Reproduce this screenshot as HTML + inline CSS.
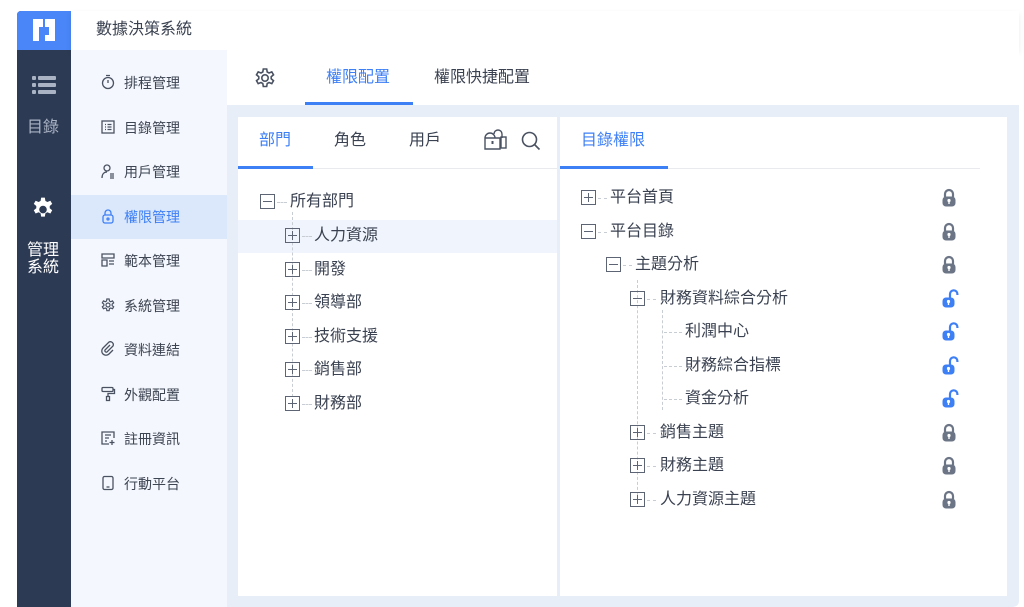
<!DOCTYPE html>
<html><head><meta charset="utf-8">
<style>
*{margin:0;padding:0;box-sizing:border-box}
body{width:1024px;height:607px;overflow:hidden;background:#fff;font-family:"Liberation Sans","Noto Sans CJK TC",sans-serif;position:relative;color:#3a4150}
.a{position:absolute}
.t{position:absolute;white-space:nowrap;line-height:1}
.tr{font-size:16px !important}
.box{position:absolute;width:15px;height:15px;border:1.5px solid #5d6575}
.box:before{content:"";position:absolute;left:2px;right:2px;top:5.5px;height:1.5px;background:#5d6575}
.box.p:after{content:"";position:absolute;top:2px;bottom:2px;left:5.5px;width:1.5px;background:#5d6575}
.dh{position:absolute;height:0;border-top:1px dashed #c8ccd3}
.dv{position:absolute;width:0;border-left:1px dashed #c8ccd3}
.si{position:absolute;left:100px;width:16px;height:16px}
.sl{position:absolute;left:124px;font-size:14px;color:#3d4452;line-height:1}
</style></head><body>
<div class="a" style="left:17px;top:11px;width:54px;height:596px;background:#2c3a54;border-radius:4px 0 0 0"></div>
<div class="a" style="left:17px;top:11px;width:54px;height:39px;background:#4a86f7;border-radius:4px 0 0 0"></div>
<svg class="a" style="left:31px;top:17px" width="26" height="26" viewBox="0 0 26 26"><path d="M2 2h10v8h-4v14h-6z M14 2h10v22h-10v-6h4v-8h-4z" fill="#fff"/></svg>
<svg class="a" style="left:32px;top:75px" width="24" height="20" viewBox="0 0 24 20"><g fill="#aab3c4"><rect x="0" y="1" width="4" height="4" rx="1"/><rect x="6" y="1" width="18" height="4" rx="1"/><rect x="0" y="8" width="4" height="4" rx="1"/><rect x="6" y="8" width="18" height="4" rx="1"/><rect x="0" y="15" width="4" height="4" rx="1"/><rect x="6" y="15" width="18" height="4" rx="1"/></g></svg>
<div class="t" style="left:27px;top:120px;font-size:16px;color:#aab3c4">目錄</div>
<svg class="a" style="left:30px;top:196px" width="26" height="26" viewBox="0 0 24 24"><path fill="#fff" fill-rule="evenodd" d="M10.3 1h3.4l.5 3 1.8 1 2.8-1.1 1.7 2.9-2.3 1.9v2.1l2.3 1.9-1.7 2.9-2.8-1.1-1.8 1-.5 3h-3.4l-.5-3-1.8-1-2.8 1.1-1.7-2.9 2.3-1.9v-2.1L3.5 6.8l1.7-2.9L8 5l1.8-1zM12 8.5a3.5 3.5 0 100 7 3.5 3.5 0 000-7z" transform="translate(0 0.5)"/></svg>
<div class="t" style="left:27px;top:242px;font-size:16px;color:#fff;line-height:17px">管理<br>系統</div>
<div class="a" style="left:71px;top:11px;width:948px;height:39px;background:#fff;box-shadow:0 3px 6px rgba(0,0,0,.08)"></div>
<div class="t" style="left:96px;top:22px;font-size:16px;color:#3a4150">數據決策系統</div>
<div class="a" style="left:71px;top:50px;width:156px;height:557px;background:#f4f7fd"></div>
<div class="a" style="left:71px;top:195px;width:156px;height:44px;background:#dbe8fb"></div>
<svg class="si" style="top:74px" viewBox="0 0 16 16" fill="none" stroke="#4a5262" stroke-width="1.3"><circle cx="8" cy="9" r="5.5"/><path d="M6 1.5h4M8 9V6"/></svg><div class="sl" style="top:76px">排程管理</div>
<svg class="si" style="top:119px" viewBox="0 0 16 16" fill="none" stroke="#4a5262" stroke-width="1.3"><rect x="2" y="2" width="12" height="12"/><path d="M5 5.5h1M7.5 5.5h4M5 8h1M7.5 8h4M5 10.5h1M7.5 10.5h4"/></svg><div class="sl" style="top:121px">目錄管理</div>
<svg class="si" style="top:163px" viewBox="0 0 16 16" fill="none" stroke="#4a5262" stroke-width="1.3"><circle cx="7" cy="5" r="3"/><path d="M2 15c0-4 2-6 5-6M10 11h4M10 13h4M10 15h4"/></svg><div class="sl" style="top:165px">用戶管理</div>
<svg class="si" style="top:208px" viewBox="0 0 16 16" fill="none" stroke="#3d7ff5" stroke-width="1.3"><rect x="3" y="7" width="10" height="8" rx="2"/><path d="M5 7V5a3 3 0 016 0v2"/><circle cx="8" cy="11" r="1"/></svg><div class="sl" style="top:210px;color:#3d7ff5">權限管理</div>
<svg class="si" style="top:252px" viewBox="0 0 16 16" fill="none" stroke="#4a5262" stroke-width="1.3"><path d="M2 2h12v4H2zM2 8h5v6H2zM9 9h5M9 12h5"/></svg><div class="sl" style="top:254px">範本管理</div>
<svg class="si" style="top:297px" viewBox="0 0 24 24" fill="none" stroke="#4a5262" stroke-width="1.8"><path d="M10.3 1h3.4l.5 3 1.8 1 2.8-1.1 1.7 2.9-2.3 1.9v2.1l2.3 1.9-1.7 2.9-2.8-1.1-1.8 1-.5 3h-3.4l-.5-3-1.8-1-2.8 1.1-1.7-2.9 2.3-1.9v-2.1L3.5 6.8l1.7-2.9L8 5l1.8-1z" transform="translate(0 2)"/><circle cx="12" cy="12" r="3"/></svg><div class="sl" style="top:299px">系統管理</div>
<svg class="si" style="top:341px" viewBox="0 0 16 16" fill="none" stroke="#4a5262" stroke-width="1.3"><path d="M10 4l-5 5a1.5 1.5 0 002 2l6-6a3 3 0 00-4-4L3 7a4 4 0 006 6l4-4"/></svg><div class="sl" style="top:343px">資料連結</div>
<svg class="si" style="top:386px" viewBox="0 0 16 16" fill="none" stroke="#4a5262" stroke-width="1.3"><rect x="2" y="1.5" width="11" height="4" rx="1"/><path d="M13 3.5h1.5v4H8v3M6.5 10.5h3v4h-3z"/></svg><div class="sl" style="top:388px">外觀配置</div>
<svg class="si" style="top:430px" viewBox="0 0 16 16" fill="none" stroke="#4a5262" stroke-width="1.3"><path d="M14 8V2H2v12h7M5 5h6M5 8h4M5 11h2M12 10v5M9.5 12.5h5"/></svg><div class="sl" style="top:432px">註冊資訊</div>
<svg class="si" style="top:475px" viewBox="0 0 16 16" fill="none" stroke="#4a5262" stroke-width="1.3"><rect x="3" y="1.5" width="10" height="13" rx="1.5"/><path d="M6.5 12h3"/></svg><div class="sl" style="top:477px">行動平台</div>
<div class="a" style="left:227px;top:50px;width:792px;height:557px;background:#e8eef8;border-radius:0 0 6px 0"></div>
<div class="a" style="left:227px;top:50px;width:792px;height:55px;background:#fff"></div>
<svg class="a" style="left:253px;top:66px" width="24" height="24" viewBox="0 0 24 24" fill="none" stroke="#4a5262" stroke-width="1.6"><path d="M10.3 1h3.4l.5 3 1.8 1 2.8-1.1 1.7 2.9-2.3 1.9v2.1l2.3 1.9-1.7 2.9-2.8-1.1-1.8 1-.5 3h-3.4l-.5-3-1.8-1-2.8 1.1-1.7-2.9 2.3-1.9v-2.1L3.5 6.8l1.7-2.9L8 5l1.8-1z" transform="translate(0 2)"/><circle cx="12" cy="12" r="3.2"/></svg>
<div class="t" style="left:326px;top:70px;font-size:16px;color:#3d7ff5">權限配置</div>
<div class="a" style="left:305px;top:102px;width:108px;height:3px;background:#3d7ff5"></div>
<div class="t" style="left:434px;top:70px;font-size:16px;color:#3a4150">權限快捷配置</div>
<div class="a" style="left:238px;top:117px;width:319px;height:479px;background:#fff"></div>
<div class="a" style="left:238px;top:168px;width:319px;height:1px;background:#e8eaee"></div>
<div class="t" style="left:259px;top:133px;font-size:16px;color:#3d7ff5">部門</div>
<div class="a" style="left:238px;top:166px;width:75px;height:3px;background:#3d7ff5"></div>
<div class="t" style="left:334px;top:133px;font-size:16px">角色</div>
<div class="t" style="left:409px;top:133px;font-size:16px">用戶</div>
<svg class="a" style="left:484px;top:129px" width="24" height="22" viewBox="0 0 24 22" fill="none" stroke="#4a5262" stroke-width="1.4"><path d="M10 5a4 4 0 018 0v4"/><rect x="17" y="8" width="5" height="11"/><path d="M1 19V9a5 5 0 0110 0M1 9h15v11H1z"/><path d="M8.5 12v3" stroke-width="2"/></svg>
<svg class="a" style="left:520px;top:130px" width="22" height="22" viewBox="0 0 22 22" fill="none" stroke="#4a5262" stroke-width="1.6"><circle cx="9.5" cy="9.5" r="7"/><path d="M14.5 14.5l5 5"/></svg>
<div class="a" style="left:238px;top:220px;width:319px;height:33px;background:#f0f5fd"></div>
<div class="box" style="left:260px;top:194px"></div><div class="dh" style="left:277px;top:202px;width:10px"></div>
<div class="t tr" style="left:290px;top:194px">所有部門</div>
<div class="dv" style="left:292px;top:212px;height:185px"></div>
<div class="box p" style="left:285px;top:228px"></div><div class="dh" style="left:302px;top:236px;width:10px"></div><div class="t tr" style="left:314px;top:228px">人力資源</div>
<div class="box p" style="left:285px;top:262px"></div><div class="dh" style="left:302px;top:270px;width:10px"></div><div class="t tr" style="left:314px;top:262px">開發</div>
<div class="box p" style="left:285px;top:295px"></div><div class="dh" style="left:302px;top:303px;width:10px"></div><div class="t tr" style="left:314px;top:295px">領導部</div>
<div class="box p" style="left:285px;top:329px"></div><div class="dh" style="left:302px;top:337px;width:10px"></div><div class="t tr" style="left:314px;top:329px">技術支援</div>
<div class="box p" style="left:285px;top:362px"></div><div class="dh" style="left:302px;top:370px;width:10px"></div><div class="t tr" style="left:314px;top:362px">銷售部</div>
<div class="box p" style="left:285px;top:396px"></div><div class="dh" style="left:302px;top:404px;width:10px"></div><div class="t tr" style="left:314px;top:396px">財務部</div>
<div class="a" style="left:560px;top:117px;width:447px;height:479px;background:#fff"></div>
<div class="a" style="left:560px;top:168px;width:420px;height:1px;background:#e8eaee"></div>
<div class="t" style="left:581px;top:133px;font-size:16px;color:#3d7ff5">目錄權限</div>
<div class="a" style="left:560px;top:166px;width:108px;height:3px;background:#3d7ff5"></div>
<div class="box p" style="left:581px;top:190px"></div><div class="dh" style="left:598px;top:198px;width:9px"></div><div class="t tr" style="left:610px;top:190px">平台首頁</div>
<div class="box" style="left:581px;top:224px"></div><div class="dh" style="left:598px;top:232px;width:9px"></div><div class="t tr" style="left:610px;top:224px">平台目錄</div>
<div class="box" style="left:606px;top:257px"></div><div class="dh" style="left:623px;top:265px;width:9px"></div><div class="t tr" style="left:635px;top:257px">主題分析</div>
<div class="dv" style="left:637px;top:280px;height:220px"></div>
<div class="box" style="left:630px;top:291px"></div><div class="dh" style="left:647px;top:299px;width:9px"></div><div class="t tr" style="left:660px;top:291px">財務資料綜合分析</div>
<div class="dv" style="left:662px;top:310px;height:100px"></div>
<div class="dh" style="left:664px;top:332px;width:18px"></div><div class="t tr" style="left:685px;top:324px">利潤中心</div>
<div class="dh" style="left:664px;top:366px;width:18px"></div><div class="t tr" style="left:685px;top:358px">財務綜合指標</div>
<div class="dh" style="left:664px;top:399px;width:18px"></div><div class="t tr" style="left:685px;top:391px">資金分析</div>
<div class="box p" style="left:630px;top:425px"></div><div class="dh" style="left:647px;top:433px;width:9px"></div><div class="t tr" style="left:660px;top:425px">銷售主題</div>
<div class="box p" style="left:630px;top:458px"></div><div class="dh" style="left:647px;top:466px;width:9px"></div><div class="t tr" style="left:660px;top:458px">財務主題</div>
<div class="box p" style="left:630px;top:492px"></div><div class="dh" style="left:647px;top:500px;width:9px"></div><div class="t tr" style="left:660px;top:492px">人力資源主題</div>
<svg width="0" height="0" style="position:absolute"><defs>
<g id="lc"><path d="M4 9V6a4 4 0 018 0v3" fill="none" stroke="#6b7585" stroke-width="2.2"/><rect x="1.5" y="8.5" width="13" height="10" rx="3.5" fill="#6b7585"/><circle cx="8" cy="12.5" r="1.6" fill="#fff"/><rect x="7.3" y="13" width="1.4" height="3" fill="#fff"/></g>
<g id="lo"><path d="M9 9V5a3.7 3.7 0 017.4 0v1" fill="none" stroke="#3d7ff5" stroke-width="2.2"/><rect x="1.5" y="8.5" width="12" height="10" rx="3.5" fill="#3d7ff5"/><circle cx="7.5" cy="12.5" r="1.6" fill="#fff"/><rect x="6.8" y="13" width="1.4" height="3" fill="#fff"/></g>
</defs></svg>
<svg class="a" style="left:941px;top:188px" width="18" height="20"><use href="#lc"/></svg>
<svg class="a" style="left:941px;top:222px" width="18" height="20"><use href="#lc"/></svg>
<svg class="a" style="left:941px;top:255px" width="18" height="20"><use href="#lc"/></svg>
<svg class="a" style="left:941px;top:289px" width="18" height="20"><use href="#lo"/></svg>
<svg class="a" style="left:941px;top:322px" width="18" height="20"><use href="#lo"/></svg>
<svg class="a" style="left:941px;top:356px" width="18" height="20"><use href="#lo"/></svg>
<svg class="a" style="left:941px;top:389px" width="18" height="20"><use href="#lo"/></svg>
<svg class="a" style="left:941px;top:423px" width="18" height="20"><use href="#lc"/></svg>
<svg class="a" style="left:941px;top:456px" width="18" height="20"><use href="#lc"/></svg>
<svg class="a" style="left:941px;top:490px" width="18" height="20"><use href="#lc"/></svg>
</body></html>
